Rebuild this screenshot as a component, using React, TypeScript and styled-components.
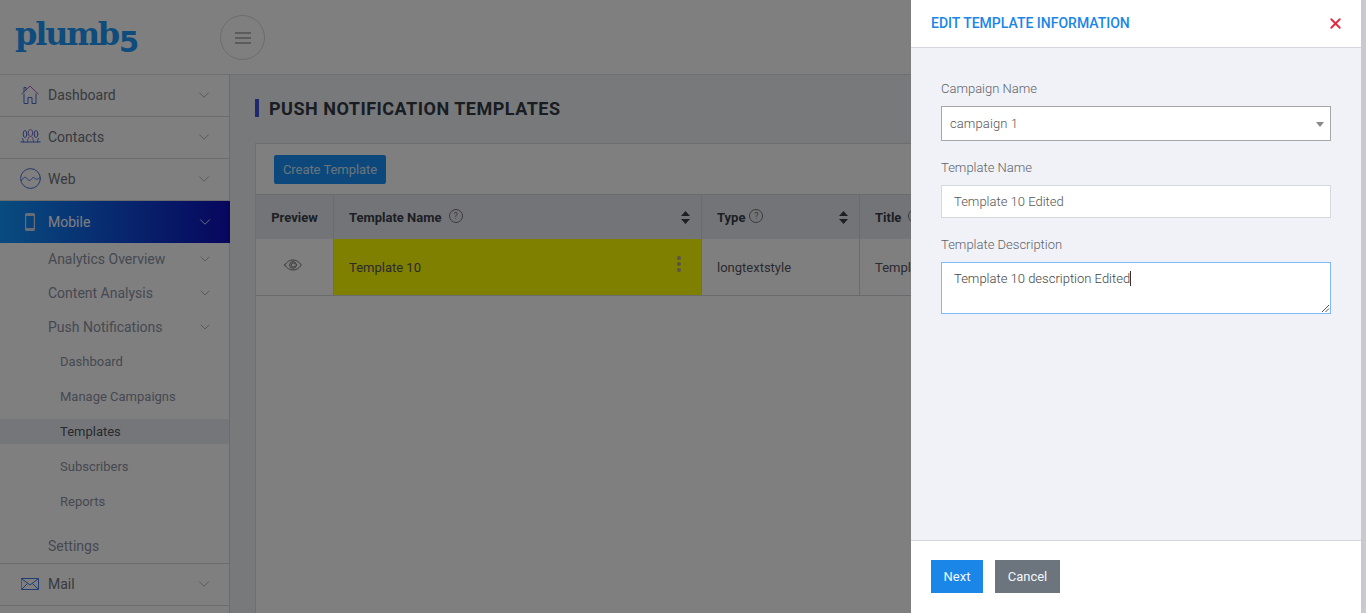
import React from "react";
import styled, { createGlobalStyle } from "styled-components";
import { ChevronDown, X } from "lucide-react";

const Global = createGlobalStyle`
  html, body { margin: 0; padding: 0; height: 100%; overflow: hidden; background: #f0f2f7; }
  * { box-sizing: border-box; }
  body { font-family: Roboto, "Liberation Sans", sans-serif; }
`;

const Page = styled.div`
  width: 1366px;
  height: 613px;
  display: flex;
  flex-direction: column;
  overflow: hidden;
`;
const Header = styled.header`
  height: 75px;
  flex: none;
  background: #fff;
  border-bottom: 1px solid #e0e0e0;
  display: flex;
  align-items: center;
  padding-left: 15px;
`;
const Logo = styled.div`
  width: 205px;
  font-family: "DejaVu Serif", serif;
  font-weight: 700;
  font-size: 32px;
  line-height: 40px;
  letter-spacing: -2.200px;
  color: #1a98f8;
  margin-top: -5px;
`;
const Five = styled.span`
  font-family: "DejaVu Sans", sans-serif;
  font-size: 29px;
  position: relative;
  top: 7px;
  left: 1px;
  letter-spacing: 0;
`;
const Burger = styled.button`
  width: 45px;
  height: 45px;
  border-radius: 50%;
  border: 1px solid #d8d8d8;
  background: #fff;
  padding: 0;
  display: flex;
  align-items: center;
  justify-content: center;
  margin-top: 1px;
`;
const Body = styled.div`
  flex: 1;
  display: flex;
  min-height: 0;
`;
const Sidebar = styled.nav`
  width: 230px;
  flex: none;
  background: #fff;
  border-right: 1px solid #d8d8d8;
`;
const MainRow = styled.div<{ $active?: boolean }>`
  height: 42px;
  display: flex;
  align-items: center;
  padding-right: 16px;
  padding-bottom: ${(p) => (p.$active ? "0" : "2px")};
  margin-right: ${(p) => (p.$active ? "-1px" : "0")};
  border-bottom: ${(p) => (p.$active ? "0" : "1px solid #d8d8d8")};
  background: ${(p) => (p.$active ? "linear-gradient(90deg,#1298ff 0%,#0e0cbc 100%)" : "transparent")};
  color: ${(p) => (p.$active ? "#fff" : "#70747f")};
  font-size: 14px;
`;
const IconSlot = styled.span`
  width: 48px;
  flex: none;
  display: flex;
  justify-content: center;
  padding-left: 12px;
`;
const RowLabel = styled.span`
  flex: 1;
`;
const SubList = styled.div`
  display: flex;
  flex-direction: column;
  margin-top: -1px;
`;
const SubRow = styled.div`
  height: 34px;
  display: flex;
  align-items: center;
  padding: 0 16px 0 48px;
  font-size: 14px;
  color: #8c92a4;
`;
const LeafList = styled.div`
  display: flex;
  flex-direction: column;
  padding-bottom: 10px;
`;
const LeafRow = styled.div<{ $active?: boolean }>`
  height: ${(p) => (p.$active ? "25px" : "35px")};
  margin: ${(p) => (p.$active ? "5px 0" : "0")};
  display: flex;
  align-items: center;
  padding-left: 60px;
  font-size: 13px;
  color: ${(p) => (p.$active ? "#50545f" : "#8c92a4")};
  background: ${(p) => (p.$active ? "#eaedf2" : "transparent")};
`;
const Settings = styled.div`
  height: 35px;
  display: flex;
  align-items: center;
  padding-left: 48px;
  font-size: 14px;
  color: #8c92a4;
  border-bottom: 1px solid #d8d8d8;
`;
const Main = styled.main`
  flex: 1;
  min-width: 0;
  padding: 22px 0 0 25px;
  background: #f0f2f7;
`;
const Title = styled.h1`
  margin: 0 0 24px;
  height: 22px;
  display: flex;
  align-items: center;
  font-size: 18px;
  font-weight: 700;
  letter-spacing: 0.5px;
  color: #333a45;
  &::before {
    content: "";
    width: 4px;
    height: 18px;
    background: #3f51d8;
    margin-right: 10px;
  }
`;
const Card = styled.section`
  width: 1086px;
  height: 500px;
  background: #fff;
  border: 1px solid #dcdcdc;
`;
const Toolbar = styled.div`
  height: 50px;
  padding: 11px 18px;
`;
const CreateBtn = styled.button`
  height: 29px;
  width: 112px;
  padding: 0;
  background: #1890f8;
  color: #d7e8f5;
  border: 0;
  border-radius: 2px;
  font: 400 13px Roboto, sans-serif;
  letter-spacing: -0.05px;
`;
const Table = styled.div`
  display: grid;
  grid-template-columns: 78px 368px 158px 1fr;
`;
const Th = styled.div<{ $center?: boolean }>`
  height: 45px;
  background: #e7e9ee;
  border-top: 1px solid #d4d6db;
  border-right: 1px solid #d4d6db;
  display: flex;
  align-items: center;
  justify-content: ${(p) => (p.$center ? "center" : "flex-start")};
  padding: ${(p) => (p.$center ? "1px 0 0" : "0 15px")};
  font-size: 13px;
  font-weight: 700;
  color: #3a3f4a;
  gap: 8px;
`;
const Td = styled.div<{ $hl?: boolean; $center?: boolean }>`
  height: 57px;
  background: ${(p) => (p.$hl ? "#ffff00" : "#fff")};
  border-right: 1px solid #d4d6db;
  border-bottom: 1px solid #d4d6db;
  display: flex;
  align-items: center;
  justify-content: ${(p) => (p.$center ? "center" : "flex-start")};
  padding: ${(p) => (p.$center ? "0 4px 5px 0" : "0 15px")};
  font-size: 13px;
  color: #55555f;
  position: relative;
`;
const Spacer = styled.span`
  flex: 1;
`;
const Help = styled.span<{ $tight?: boolean }>`
  width: 14px;
  height: 14px;
  flex: none;
  border: 1px solid #777;
  border-radius: 50%;
  font-size: 9px;
  font-weight: 400;
  line-height: 12px;
  text-align: center;
  color: #777;
  margin: -2px 0 0 ${(p) => (p.$tight ? "-4px" : "-1px")};
`;
const SortSlot = styled.span`
  display: flex;
  margin-right: -4px;
`;
const Dots = styled.span`
  display: flex;
  flex-direction: column;
  gap: 2px;
  margin: -6px 5px 0 0;
  & > i {
    width: 4px;
    height: 4px;
    border-radius: 50%;
    background: #a8a8a8;
  }
`;
const Backdrop = styled.div`
  position: fixed;
  inset: 0;
  background: rgba(0, 0, 0, 0.5);
`;
const Panel = styled.aside`
  position: fixed;
  top: 0;
  left: 911px;
  width: 450px;
  height: 613px;
  display: flex;
  flex-direction: column;
  background: #f0f2f7;
`;
const Scroll = styled.div`
  position: fixed;
  top: 0;
  left: 1361px;
  width: 5px;
  height: 613px;
  background: #c9c9cf;
`;
const PanelHead = styled.div`
  height: 48px;
  flex: none;
  background: #fff;
  border-bottom: 1px solid #d3d6dc;
  display: flex;
  align-items: center;
  justify-content: space-between;
  padding: 0 17px 1px 20px;
  color: #1a86e8;
  font-size: 14px;
  font-weight: 500;
`;
const PanelBody = styled.div`
  flex: 1;
  padding: 33px 30px 0;
`;
const Label = styled.label`
  display: block;
  font-size: 13px;
  line-height: 15px;
  color: #5e626a;
  font-weight: 300;
`;
const SelectBox = styled.div`
  height: 35px;
  margin: 10px 0 19px;
  background: #fff;
  border: 1px solid #a7a7a7;
  display: flex;
  align-items: center;
  justify-content: space-between;
  padding: 0 5px 0 8px;
  font-size: 13px;
  font-weight: 300;
  color: #555;
  letter-spacing: 0.1px;
  &::after {
    content: "";
    border-left: 4px solid transparent;
    border-right: 4px solid transparent;
    border-top: 5px solid #888;
    margin: 2px 1px 0 0;
  }
`;
const Field = styled.div`
  height: 33px;
  margin: 10px 0 19px;
  background: #fff;
  border: 1px solid #d4d7dd;
  padding: 0 12px;
  display: flex;
  align-items: center;
  font-size: 13px;
  font-weight: 300;
  color: #555;
`;
const Area = styled.div`
  height: 52px;
  margin-top: 10px;
  background: #fff;
  border: 1px solid #7dbbf7;
  padding: 8px 12px;
  font-size: 13px;
  font-weight: 300;
  line-height: 16px;
  color: #444;
  position: relative;
`;
const Caret = styled.span`
  display: inline-block;
  width: 1px;
  height: 15px;
  background: #333;
  vertical-align: -3px;
`;
const Grip = styled.svg`
  position: absolute;
  right: 0;
  bottom: 0;
`;
const PanelFoot = styled.div`
  height: 73px;
  flex: none;
  background: #fff;
  border-top: 1px solid #d3d6dc;
  display: flex;
  align-items: flex-start;
  gap: 12px;
  padding: 19px 20px 0;
`;
const Btn = styled.button<{ $grey?: boolean }>`
  height: 33px;
  width: ${(p) => (p.$grey ? "65px" : "52px")};
  padding: 0;
  border: 0;
  background: ${(p) => (p.$grey ? "#6c757d" : "#1a86e8")};
  color: #f4f8fc;
  font: 400 13px Roboto, sans-serif;
`;

const ic = { fill: "none", strokeWidth: 1, strokeLinecap: "round" as const, strokeLinejoin: "round" as const };

const House = () => (
  <svg width="18" height="19" viewBox="0 0 18 19" {...ic} stroke="#4a6fd8">
    <path d="M.8 9 9 1l8.200 8" stroke="#b060c0" />
    <path d="M3 7V2.500H5V5M3 9v9.500h4v-6h4v6h4V9" />
  </svg>
);
const People = () => (
  <svg width="21" height="15" viewBox="0 0 21 15" {...ic} stroke="#4a6fd8">
    <path d="M.8 13h19.400M3.500 13c-.5-1.500 0-2-1-3.500M17.500 13c.5-1.500 0-2 1-3.500" />
    <ellipse cx="5" cy="5" rx="1.800" ry="3.500" />
    <ellipse cx="16" cy="5" rx="1.800" ry="3.500" />
    <ellipse cx="10.500" cy="4" rx="2.300" ry="3.500" stroke="#a070d0" />
    <path d="M7.500 13c0-3 1-4 1.500-5M13.500 13c0-3-1-4-1.500-5" stroke="#a070d0" />
  </svg>
);
const WaveCircle = () => (
  <svg width="21" height="21" viewBox="0 0 21 21" {...ic} stroke="#4a6fd8">
    <circle cx="10.500" cy="10.500" r="9.900" />
    <path d="M1.500 12.500c2-3 3.500-4 5-2.500s2.500 3.500 4 2 2.500-3.500 4-2 3 2 5.500-.5" />
  </svg>
);
const Phone = () => (
  <svg width="10" height="18" viewBox="0 0 10 18" fill="#d0d8e8">
    <path fillRule="evenodd" d="M1.500 0h7A1.500 1.500 0 0 1 10 1.500v15A1.500 1.500 0 0 1 8.500 18h-7A1.500 1.500 0 0 1 0 16.500v-15A1.500 1.500 0 0 1 1.500 0Zm-.3 3v12h7.600V3H1.200Z" />
  </svg>
);
const Envelope = () => (
  <svg width="18" height="12" viewBox="0 0 18 12" {...ic} stroke="#3f7ae8">
    <rect x="0.500" y="0.500" width="17" height="11" />
    <path d="m1 1 8 6 8-6M1 11l5.500-5.500M17 11l-5.500-5.500" />
  </svg>
);
const Eye = () => (
  <svg width="18" height="12" viewBox="0 0 18 12" {...ic} stroke="#666" strokeWidth={0.9}>
    <path d="M.7 6C3 2.500 6 1 9 1s6 1.500 8.300 5C15 9.500 12 11 9 11S3 9.500.7 6Z" />
    <circle cx="9" cy="6" r="3.400" />
    <path d="M10.600 4.600A2 2 0 1 0 10.600 7.400" />
  </svg>
);
const Sort = () => (
  <SortSlot>
    <svg width="9" height="13" viewBox="0 0 9 13" fill="#3a3f4a">
      <path d="M4.500 0 9 5H0ZM0 8h9l-4.500 5Z" />
    </svg>
  </SortSlot>
);
const Bars = () => (
  <svg width="16" height="12" viewBox="0 0 16 12" fill="#b8b8b8">
    <path d="M0 0h16v2H0zM0 5h16v2H0zM0 10h16v2H0z" />
  </svg>
);
const Chev = ({ light, small }: { light?: boolean; small?: boolean }) => (
  <ChevronDown size={small ? 16 : 18} strokeWidth={small ? 1.2 : 1.1} color={light ? "#fff" : "#a0a0a0"} />
);

const mainRow = (label: string, icon: React.ReactNode, active?: boolean) => (
  <MainRow $active={active}>
    <IconSlot>{icon}</IconSlot>
    <RowLabel>{label}</RowLabel>
    <Chev light={active} />
  </MainRow>
);

export default function App() {
  return (
    <Page>
      <Global />
      <Header>
        <Logo>
          plumb<Five>5</Five>
        </Logo>
        <Burger>
          <Bars />
        </Burger>
      </Header>
      <Body>
        <Sidebar>
          {mainRow("Dashboard", <House />)}
          {mainRow("Contacts", <People />)}
          {mainRow("Web", <WaveCircle />)}
          {mainRow("Mobile", <Phone />, true)}
          <SubList>
            {["Analytics Overview", "Content Analysis", "Push Notifications"].map((s) => (
              <SubRow key={s}>
                <RowLabel>{s}</RowLabel>
                <Chev small />
              </SubRow>
            ))}
          </SubList>
          <LeafList>
            {["Dashboard", "Manage Campaigns", "Templates", "Subscribers", "Reports"].map((s) => (
              <LeafRow key={s} $active={s === "Templates"}>
                {s}
              </LeafRow>
            ))}
          </LeafList>
          <Settings>Settings</Settings>
          {mainRow("Mail", <Envelope />)}
        </Sidebar>
        <Main>
          <Title>PUSH NOTIFICATION TEMPLATES</Title>
          <Card>
            <Toolbar>
              <CreateBtn>Create Template</CreateBtn>
            </Toolbar>
            <Table>
              <Th $center>Preview</Th>
              <Th>
                Template Name <Help>?</Help>
                <Spacer />
                <Sort />
              </Th>
              <Th>
                Type <Help $tight>?</Help>
                <Spacer />
                <Sort />
              </Th>
              <Th>
                Title <Help>?</Help>
              </Th>
              <Td $center>
                <Eye />
              </Td>
              <Td $hl>
                Template 10
                <Spacer />
                <Dots>
                  <i />
                  <i />
                  <i />
                </Dots>
              </Td>
              <Td>longtextstyle</Td>
              <Td>Template 10</Td>
            </Table>
          </Card>
        </Main>
      </Body>
      <Backdrop />
      <Panel>
        <PanelHead>
          EDIT TEMPLATE INFORMATION
          <X size={17} strokeWidth={2.6} color="#e5283f" />
        </PanelHead>
        <PanelBody>
          <Label>Campaign Name</Label>
          <SelectBox>campaign 1</SelectBox>
          <Label>Template Name</Label>
          <Field>Template 10 Edited</Field>
          <Label>Template Description</Label>
          <Area>
            Template 10 description Edited
            <Caret />
            <Grip width="9" height="9" viewBox="0 0 9 9" stroke="#555" fill="none">
              <path d="M1 8 8 1M4.500 8 8 4.500" />
            </Grip>
          </Area>
        </PanelBody>
        <PanelFoot>
          <Btn>Next</Btn>
          <Btn $grey>Cancel</Btn>
        </PanelFoot>
      </Panel>
      <Scroll />
    </Page>
  );
}
